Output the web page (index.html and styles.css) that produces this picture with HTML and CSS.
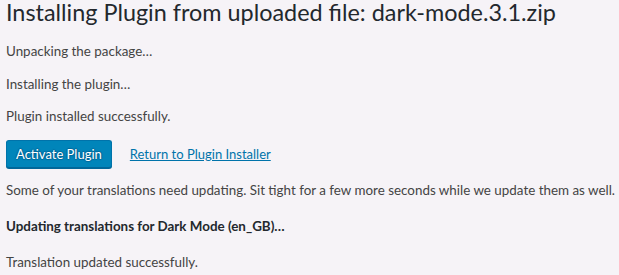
FILE: index.html
```html
<!DOCTYPE html>
<html lang="en">
<head>
<meta charset="utf-8">
<title>Installing Plugin</title>
<link rel="stylesheet" href="styles.css">
</head>
<body>
<div class="wrap">
  <h1 class="page-title">Installing Plugin from uploaded file: dark-mode.3.1.zip</h1>
  <p class="msg">Unpacking the package&#8230;</p>
  <p class="msg">Installing the plugin&#8230;</p>
  <p class="msg">Plugin installed successfully.</p>
  <div class="actions">
    <a class="button-primary" href="#">Activate Plugin</a>
    <a class="link" href="#">Return to Plugin Installer</a>
  </div>
  <p class="msg">Some of your translations need updating. Sit tight for a few more seconds while we update them as well.</p>
  <h4 class="update-title">Updating translations for Dark Mode (en_GB)&#8230;</h4>
  <p class="msg">Translation updated successfully.</p>
</div>
</body>
</html>
```
FILE: styles.css
```css
html, body {
  margin: 0;
  padding: 0;
  background: #f6f3f7;
}
body {
  font-family: Lato, "Liberation Sans", sans-serif;
  font-size: 13.4px;
  color: #444;
  overflow: hidden;
}
.wrap {
  padding-left: 6px;
  white-space: nowrap;
}
.page-title {
  margin: 0 0 18px;
  font-size: 23.4px;
  font-weight: 400;
  line-height: 24px;
  color: #23282d;
}
.msg {
  margin: 13px 0;
  line-height: 19.5px;
}
.actions {
  display: flex;
  align-items: baseline;
  gap: 18px;
  margin: 13px 0;
}
.button-primary {
  display: inline-block;
  box-sizing: border-box;
  height: 28px;
  line-height: 26px;
  padding: 0 9px 1px;
  font-size: 13px;
  background: #0085ba;
  border: 1px solid #0073aa;
  border-bottom-color: #006799;
  border-radius: 3px;
  box-shadow: 0 1px 0 #006799;
  color: #fff;
  text-decoration: none;
  text-shadow: 0 -1px 1px #006799, 1px 0 1px #006799, 0 1px 1px #006799, -1px 0 1px #006799;
}
.link {
  font-size: 13px;
  color: #0073aa;
  text-decoration: underline;
}
.update-title {
  margin: 17.3px 0;
  font-size: 13.4px;
  font-weight: 700;
  line-height: 18.2px;
  color: #23282d;
}
```
